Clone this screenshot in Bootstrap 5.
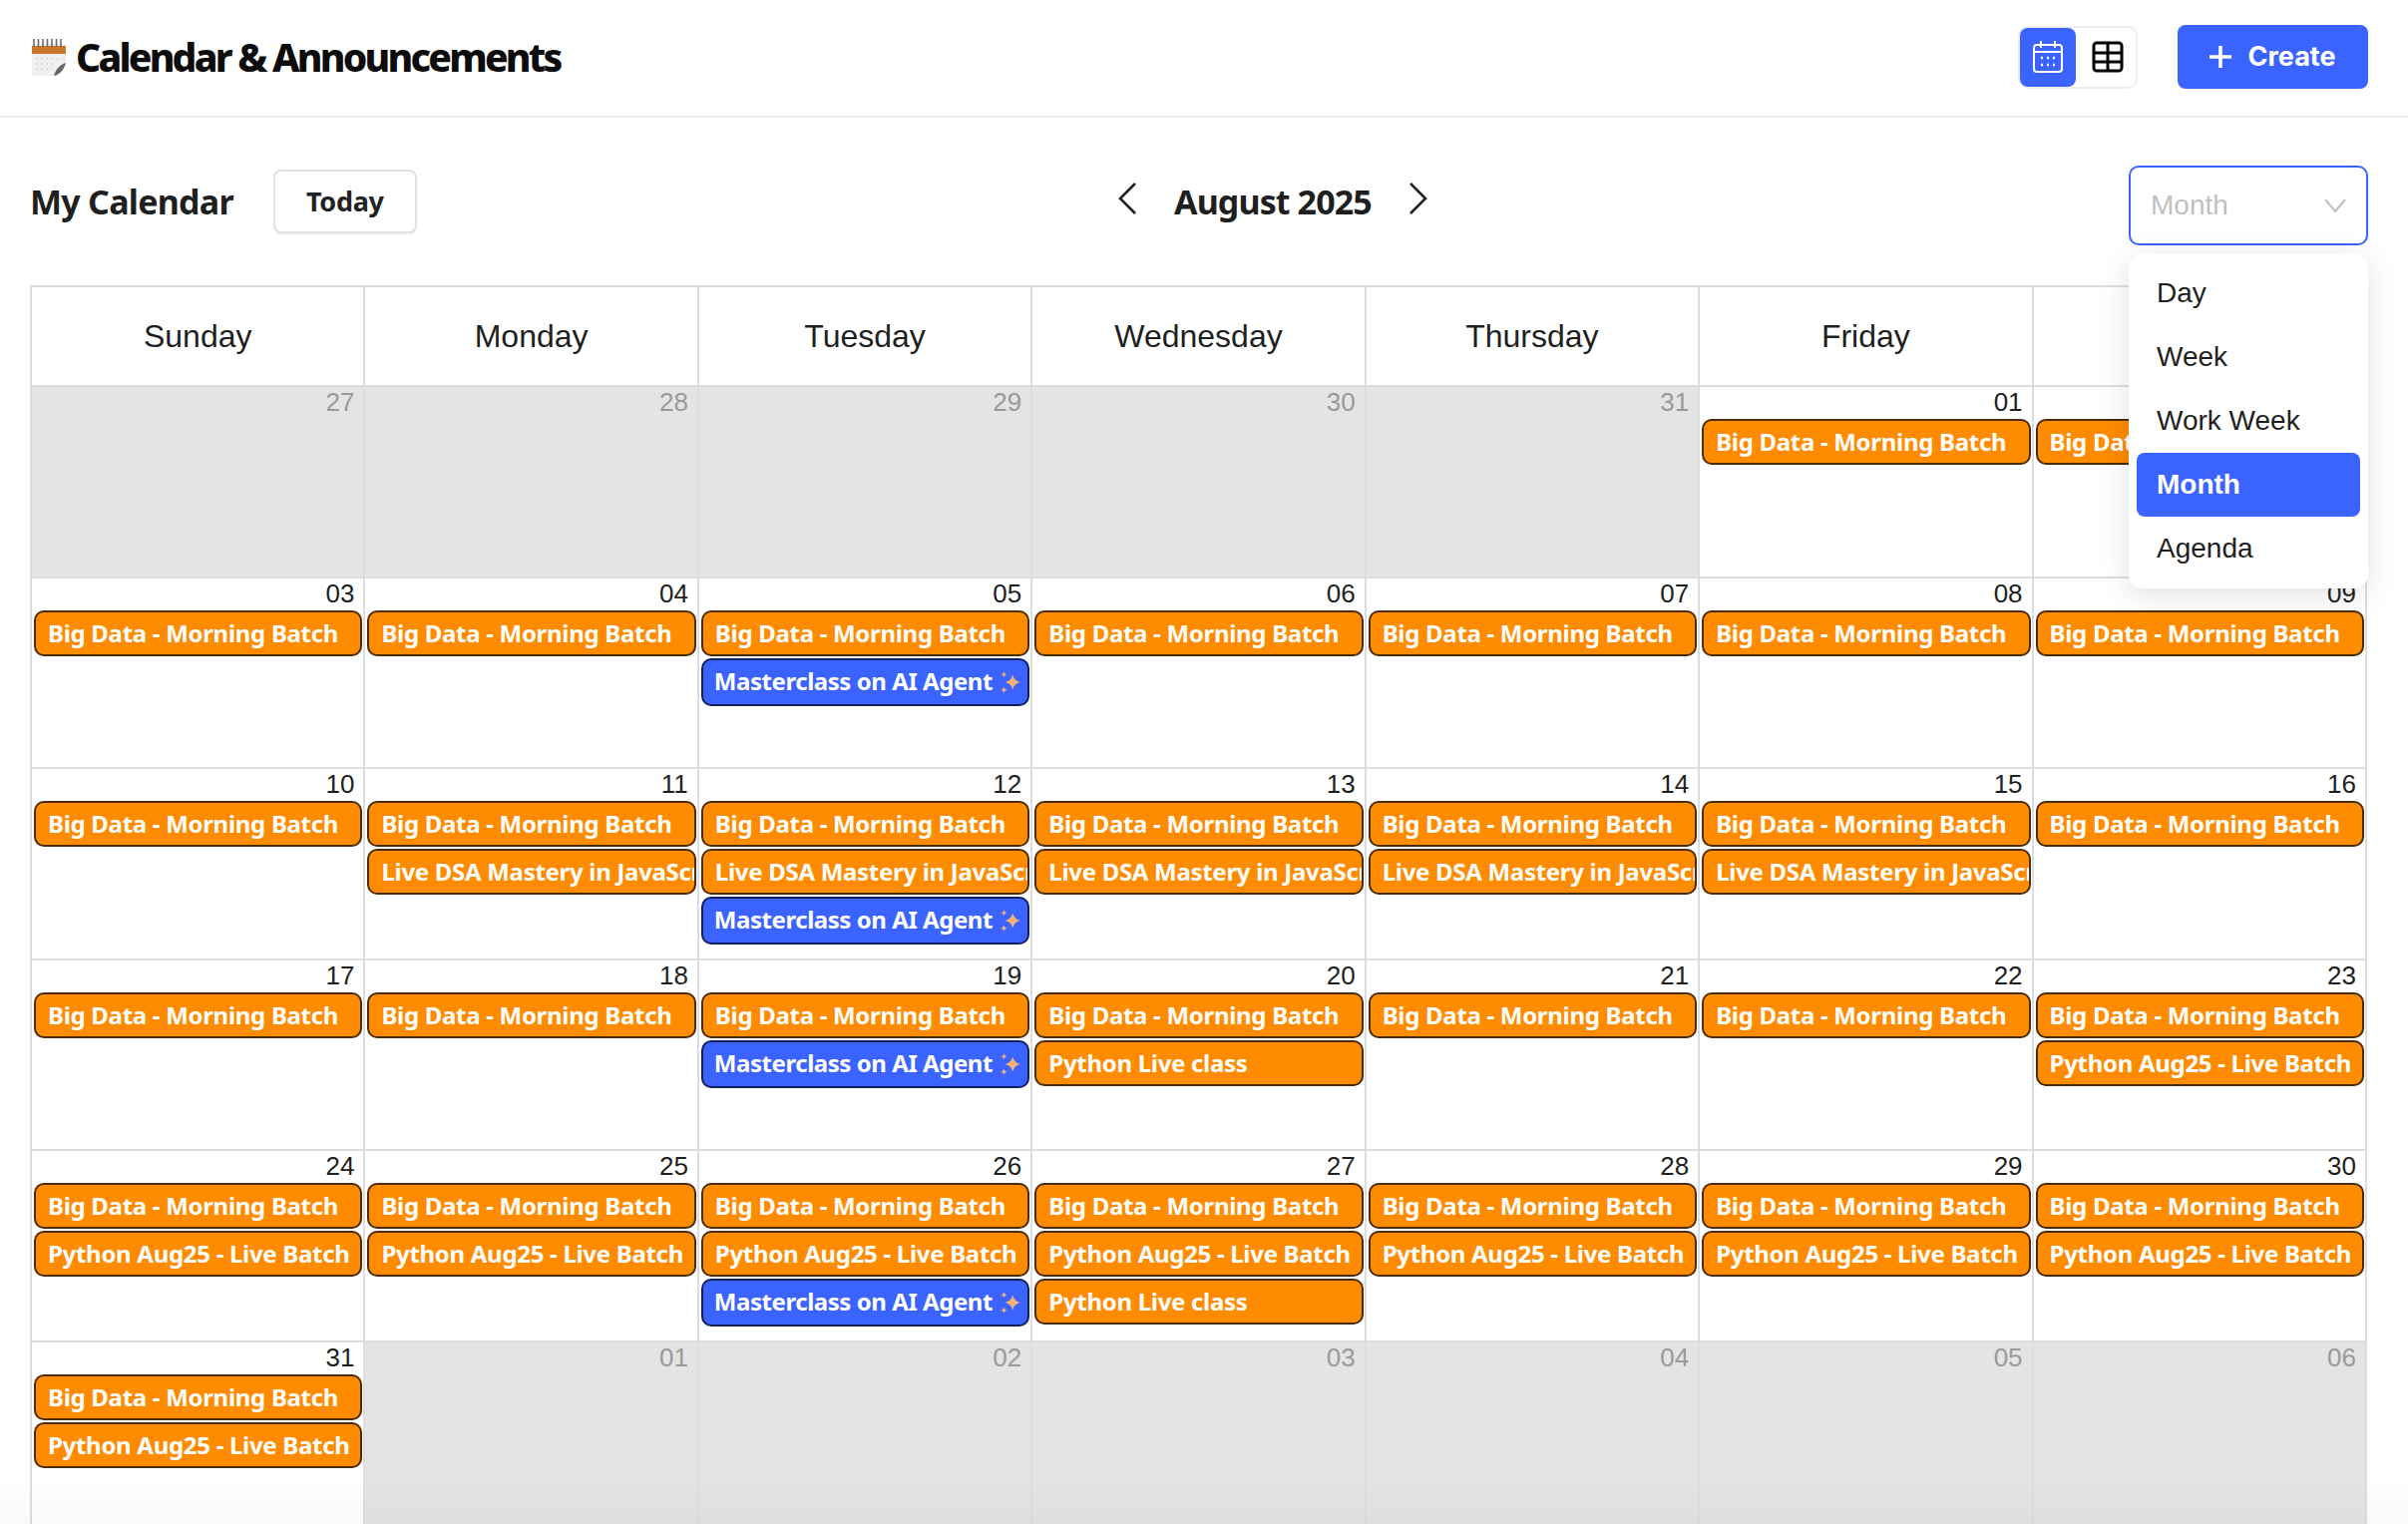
<!DOCTYPE html>
<html lang="en">

<head>
    <meta charset="UTF-8">
    <meta name="viewport" content="width=device-width, initial-scale=1.0">
    <title>Calendar &amp; Announcements</title>
    <link href="https://cdn.jsdelivr.net/npm/bootstrap@5.3.0/dist/css/bootstrap.min.css" rel="stylesheet">
    <style>
        :root { --brand: #3b63ff; --line: #dddddd; }
        html, body { height: 1528px; overflow: hidden; }
        body { font-family: "Liberation Sans", Arial, sans-serif; color: #1f1f1f; background: #fff; position: relative; }

        .top-bar { height: 118px; padding: 0 40px 2px 32px; border-bottom: 2px solid #ececec; }
        .page-title { font-family: "Noto Sans", sans-serif; font-weight: 800; font-size: 39px; letter-spacing: -2.75px; color: #0c0c0c; margin: 0 0 0 2px; }
        .view-switch { width: 120px; height: 63px; border: 2px solid #eeeeee; border-radius: 10px; }
        .view-btn { width: 56px; border-radius: 8px; }
        .view-btn.on { background: var(--brand); }
        .view-btn.plain { width: 60px; padding-left: 4px; }
        .create-btn { width: 191px; height: 64px; margin-left: 40px; background: var(--brand); color: #fff; border: 0; border-radius: 8px; font-family: Inter, sans-serif; font-weight: 700; font-size: 27px; }

        .tool-bar { height: 168px; padding: 0 40px 0 30px; }
        .cal-label { font-family: "Noto Sans", sans-serif; font-weight: 700; font-size: 34px; letter-spacing: -.75px; margin: 0 40px 0 0; }
        .today-btn { width: 144px; height: 64px; background: #fff; border: 2px solid #e0e0e0; border-radius: 8px; font-family: "Noto Sans", sans-serif; font-weight: 700; font-size: 27px; letter-spacing: -.3px; color: #222; box-shadow: 0 2px 0 #f6f6f6; }
        .month-name { font-family: "Noto Sans", sans-serif; font-weight: 700; font-size: 34px; letter-spacing: -.9px; margin: 0 38px; }
        .nav-arrow { margin-bottom: 6px; }
        .view-select { width: 240px; height: 80px; margin-top: 8px; padding: 0 20px 0 20px; border: 2px solid var(--brand); border-radius: 10px; font-size: 28px; color: #bfbfbf; }

        .cal-grid { margin: 0 0 0 30px; width: 2343px; border-top: 2px solid var(--line); border-left: 2px solid var(--line); }
        .cal-head, .cal-week { display: grid; grid-template-columns: repeat(7, 1fr); }
        .cal-head > div { height: 98px; font-size: 32px; border-right: 2px solid var(--line); }
        .cal-week { height: 191.6px; border-top: 2px solid var(--line); }
        .cal-day { min-width: 0; padding: 0 1px 0 2px; border-right: 2px solid var(--line); }
        .cal-day.off { background: #e4e4e4; }
        .day-num { height: 32px; padding-right: 8px; font-size: 26px; line-height: 31px; text-align: right; color: #1f1f1f; }
        .off .day-num { color: #9a9a9a; }

        .cal-event { height: 46px; margin-bottom: 2px; padding: 0 0 0 12px; border: 2px solid #4a2c07; border-radius: 10px; background: #ff8c00; color: #fff; font-family: "Noto Sans", sans-serif; font-weight: 700; font-size: 24px; line-height: 41px; letter-spacing: -.3px; white-space: nowrap; overflow: hidden; }
        .cal-event.blue { height: 48px; margin-bottom: 0; padding-left: 11px; background: var(--brand); border-color: #12205c; letter-spacing: -.45px; }
        .cal-event svg { margin-left: 1px; vertical-align: -4px; }

        .view-menu { position: absolute; top: 254px; right: 40px; width: 240px; height: 336px; padding: 8px; background: #fff; border-radius: 14px; box-shadow: 0 6px 32px rgba(0, 0, 0, .12); font-size: 28px; }
        .view-menu div { height: 64px; padding-left: 20px; line-height: 64px; border-radius: 8px; }
        .view-menu .on { background: var(--brand); color: #fff; font-weight: 700; }
        .bottom-fade { position: absolute; left: 0; right: 0; bottom: 0; height: 50px; background: linear-gradient(rgba(0, 0, 0, 0), rgba(0, 0, 0, .025)); pointer-events: none; }
    </style>
</head>

<body>
    <header class="top-bar d-flex align-items-center justify-content-between">
        <div class="d-flex align-items-center gap-2">
            <svg width="34" height="38" viewBox="0 0 34 38">
                <path d="M0 6h34v20l-9 12H0z" fill="#efefef" />
                <path d="M0 8h34v8H0z" fill="#c9752a" />
                <path d="M2 1v8M6.500 1v8M11 1v8M15.500 1v8M20 1v8M24.500 1v8M29 1v8" stroke="#666" stroke-width="1.500" />
                <path d="M4 21h26M4 26h20M4 31h16" stroke="#dcdcdc" stroke-width="2" stroke-dasharray="2 3" />
                <path d="M34 25c-6 2-10 6-12 13 5-1 10-5 12-13z" fill="#666" />
            </svg>
            <h1 class="page-title">Calendar &amp; Announcements</h1>
        </div>
        <div class="d-flex align-items-center">
            <div class="view-switch d-flex">
                <div class="view-btn on d-flex align-items-center justify-content-center">
                    <svg width="32" height="34" viewBox="0 0 32 34" fill="none" stroke="#fff" stroke-width="2">
                        <rect x="2" y="5" width="28" height="27" rx="3" />
                        <path d="M2 12h28M9 1v7M23 1v7" />
                        <path d="M9 18h2M15 18h2M21 18h2M9 25h2M15 25h2M21 25h2" stroke-width="2.600" />
                    </svg>
                </div>
                <div class="view-btn plain d-flex align-items-center justify-content-center">
                    <svg width="32" height="32" viewBox="0 0 32 32" fill="none" stroke="#000" stroke-width="3">
                        <rect x="2" y="2" width="28" height="28" rx="3" />
                        <path d="M2 12h28M2 21h28M16 2v28" />
                    </svg>
                </div>
            </div>
            <button class="create-btn d-flex align-items-center justify-content-center gap-3" type="button">
                <svg width="22" height="22" viewBox="0 0 22 22" stroke="#fff" stroke-width="3.600"><path d="M11 0v22M0 11h22" /></svg>
                Create
            </button>
        </div>
    </header>

    <div class="tool-bar d-flex align-items-center justify-content-between">
        <div class="d-flex align-items-center">
            <h2 class="cal-label">My Calendar</h2>
            <button class="today-btn" type="button">Today</button>
        </div>
        <div class="d-flex align-items-center">
            <svg class="nav-arrow" width="18" height="32" viewBox="0 0 18 32" fill="none" stroke="#222" stroke-width="2.600"><path d="M17 1 2 16l15 15" /></svg>
            <div class="month-name">August 2025</div>
            <svg class="nav-arrow" width="18" height="32" viewBox="0 0 18 32" fill="none" stroke="#222" stroke-width="2.600"><path d="M1 1l15 15L1 31" /></svg>
        </div>
        <div class="view-select d-flex align-items-center justify-content-between">
            <span>Month</span>
            <svg width="22" height="14" viewBox="0 0 22 14" fill="none" stroke="#bfbfbf" stroke-width="2"><path d="M1 1l10 12L21 1" /></svg>
        </div>
    </div>

    <div class="cal-grid" id="calGrid">
        <div class="cal-head">
            <div class="d-flex align-items-center justify-content-center">Sunday</div>
            <div class="d-flex align-items-center justify-content-center">Monday</div>
            <div class="d-flex align-items-center justify-content-center">Tuesday</div>
            <div class="d-flex align-items-center justify-content-center">Wednesday</div>
            <div class="d-flex align-items-center justify-content-center">Thursday</div>
            <div class="d-flex align-items-center justify-content-center">Friday</div>
            <div class="d-flex align-items-center justify-content-center">Saturday</div>
        </div>
    </div>

    <div class="view-menu">
        <div>Day</div>
        <div>Week</div>
        <div>Work Week</div>
        <div class="on">Month</div>
        <div>Agenda</div>
    </div>
    <div class="bottom-fade"></div>

    <script src="https://cdn.jsdelivr.net/npm/bootstrap@5.3.0/dist/js/bootstrap.bundle.min.js"></script>
    <script>
        const sparkle = '<svg width="22" height="24" viewBox="0 0 20 22" fill="#f2b27a"><path d="M12 4c1 4 3 6 7 7-4 1-6 3-7 7-1-4-3-6-7-7 4-1 6-3 7-7zM4 1c.4 2 1 2.600 3 3-2 .4-2.600 1-3 3-.4-2-1-2.600-3-3 2-.4 2.600-1 3-3zM4 15c.4 2 1 2.600 3 3-2 .4-2.600 1-3 3-.4-2-1-2.600-3-3 2-.4 2.600-1 3-3z" /></svg>';
        const names = {
            B: 'Big Data - Morning Batch',
            L: 'Live DSA Mastery in JavaScript',
            M: 'Masterclass on AI Agent ' + sparkle,
            P: 'Python Aug25 - Live Batch',
            C: 'Python Live class'
        };
        // [day label, events, outside the month]
        const weeks = [
            [['27', '', 1], ['28', '', 1], ['29', '', 1], ['30', '', 1], ['31', '', 1], ['01', 'B'], ['02', 'B']],
            [['03', 'B'], ['04', 'B'], ['05', 'BM'], ['06', 'B'], ['07', 'B'], ['08', 'B'], ['09', 'B']],
            [['10', 'B'], ['11', 'BL'], ['12', 'BLM'], ['13', 'BL'], ['14', 'BL'], ['15', 'BL'], ['16', 'B']],
            [['17', 'B'], ['18', 'B'], ['19', 'BM'], ['20', 'BC'], ['21', 'B'], ['22', 'B'], ['23', 'BP']],
            [['24', 'BP'], ['25', 'BP'], ['26', 'BPM'], ['27', 'BPC'], ['28', 'BP'], ['29', 'BP'], ['30', 'BP']],
            [['31', 'BP'], ['01', '', 1], ['02', '', 1], ['03', '', 1], ['04', '', 1], ['05', '', 1], ['06', '', 1]]
        ];

        const calGrid = document.getElementById('calGrid');
        weeks.forEach(week => {
            const row = document.createElement('div');
            row.className = 'cal-week';
            row.innerHTML = week.map(([num, events, off]) => `
                <div class="cal-day${off ? ' off' : ''}">
                    <div class="day-num">${num}</div>
                    ${events.split('').map(e => `<div class="cal-event${e === 'M' ? ' blue' : ''}">${names[e]}</div>`).join('')}
                </div>`).join('');
            calGrid.appendChild(row);
        });
    </script>
</body>

</html>
